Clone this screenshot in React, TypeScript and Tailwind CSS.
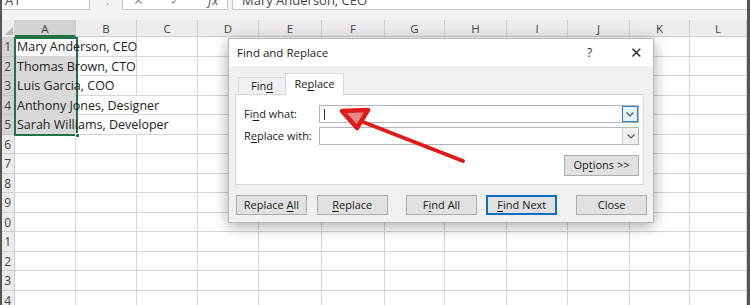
import React from "react";

const cols = [
  { name: "A", w: 61 },
  { name: "B", w: 61 },
  { name: "C", w: 61 },
  { name: "D", w: 61 },
  { name: "E", w: 63 },
  { name: "F", w: 63 },
  { name: "G", w: 60 },
  { name: "H", w: 62 },
  { name: "I", w: 61 },
  { name: "J", w: 62 },
  { name: "K", w: 60 },
  { name: "L", w: 57 },
];

const people = [
  "Mary Anderson, CEO",
  "Thomas Brown, CTO",
  "Luis Garcia, COO",
  "Anthony Jones, Designer",
  "Sarah Williams, Developer",
];

const rows = Array.from({ length: 14 }, (_, i) => i + 1);

// underlined access key inside a label
const Key = ({ children }: { children: React.ReactNode }) => (
  <span className="underline underline-offset-2">{children}</span>
);

const FormulaBar = () => (
  <div className="flex h-[10px] shrink-0 overflow-hidden bg-[#f3f3f3] text-[13px] leading-[16px] text-[#444]">
    <div className="w-[88px] border-r border-b border-[#c8c8c8] bg-white pl-[3px]">
      <div className="mt-[-8px]">A1</div>
    </div>
    <div className="w-[32px] pl-[16px] text-[#999]">
      <div className="mt-[-8px]">:</div>
    </div>
    <div className="flex w-[106px] items-start border-x border-b border-[#c8c8c8] bg-white text-[#999]">
      <div className="mt-[-8px] ml-[10px] w-[37px]">✕</div>
      <div className="mt-[-8px] w-[38px]">✓</div>
      <div className="mt-[-8px] italic text-[#555]">fx</div>
    </div>
    <div className="ml-[4px] flex-1 border-l border-b border-[#c8c8c8] bg-white pl-[9px]">
      <div className="mt-[-8px]">Mary Anderson, CEO</div>
    </div>
  </div>
);

const Sheet = () => (
  <div className="relative shrink-0 font-['Open_Sans',sans-serif]">
    {/* column headers */}
    <div className="flex h-[17px] bg-[#ededed] text-[11.5px] leading-[17px] text-[#444]">
      <div className="relative w-[13px] shrink-0 border-r border-[#cfcfcf]">
        <svg className="absolute right-[1px] bottom-[2px]" width="8" height="8" viewBox="0 0 8 8">
          <polygon points="8,0 8,8 0,8" fill="#b8b8b8" />
        </svg>
      </div>
      {cols.map((c) => (
        <div
          key={c.name}
          style={{ width: c.w }}
          className={
            c.name === "A"
              ? "shrink-0 border-r border-b-2 border-r-[#cfcfcf] border-b-[#217346] bg-[#d3d3d3] text-center"
              : "shrink-0 border-r border-b border-[#cfcfcf] text-center"
          }
        >
          {c.name}
        </div>
      ))}
    </div>

    {/* grid rows */}
    {rows.map((r) => (
      <div key={r} className="flex h-[19.5px] text-[12.5px] leading-[19px] text-[#222]">
        <div
          className={
            r <= 5
              ? "flex w-[13px] shrink-0 justify-end overflow-hidden border-r border-b border-[#c4c4c4] bg-[#d3d3d3] pr-[3px] text-[12px] text-[#444]"
              : "flex w-[13px] shrink-0 justify-end overflow-hidden border-r border-b border-[#cfcfcf] bg-[#ececec] pr-[3px] text-[12px] text-[#444]"
          }
        >
          {r}
        </div>
        {cols.map((c, ci) => {
          const selected = ci === 0 && r >= 2 && r <= 5;
          const hideRight = (ci === 0 && r <= 5) || (ci === 1 && (r === 4 || r === 5));
          return (
            <div
              key={c.name}
              style={{ width: c.w }}
              className={[
                "shrink-0 whitespace-nowrap border-b border-[#d6d6d6]",
                hideRight ? "border-r border-r-transparent" : "border-r",
                selected ? "bg-[#d9d9d9]" : "",
              ].join(" ")}
            >
              {ci === 0 && r <= 5 && (
                <span className="relative z-10 pl-[2px]">{people[r - 1]}</span>
              )}
            </div>
          );
        })}
      </div>
    ))}

    {/* selection box with fill handle */}
    <div className="absolute top-[17px] left-[12px] h-[99px] w-[64px] border-2 border-[#217346]">
      <div className="absolute right-[-4px] bottom-[-4px] h-[5px] w-[5px] border border-white bg-[#217346]" />
    </div>
  </div>
);

const Button = ({
  children,
  className,
  primary,
}: {
  children: React.ReactNode;
  className?: string;
  primary?: boolean;
}) => (
  <div
    className={[
      "flex h-[20px] w-[71px] items-center justify-center bg-[#e1e1e1] text-[11px] text-[#1a1a1a]",
      primary ? "border-2 border-[#0a6fc2]" : "border border-[#adadad]",
      className ?? "",
    ].join(" ")}
  >
    <span className="whitespace-pre">{children}</span>
  </div>
);

const Combo = ({ focused }: { focused?: boolean }) => (
  <div className="flex h-[18px] flex-1 border border-[#b4b4b4] bg-white">
    <div className="flex flex-1 items-center pl-[4px]">
      {focused && <div className="h-[11px] w-[1px] bg-[#333]" />}
    </div>
    <div
      className={
        focused
          ? "flex w-[16px] items-center justify-center border border-[#2b7fd0] bg-[#e5f1fb]"
          : "flex w-[16px] items-center justify-center border-l border-[#c8c8c8] bg-[#f0f0f0]"
      }
    >
      <svg width="8" height="5" viewBox="0 0 8 5">
        <path d="M0.5 0.5 L4 4 L7.5 0.5" fill="none" stroke="#555" strokeWidth="1.2" />
      </svg>
    </div>
  </div>
);

const Dialog = () => (
  <div className="absolute top-[38px] left-[228px] flex h-[185px] w-[426px] flex-col border border-[#b9b9b9] bg-[#f0f0f0] font-['Open_Sans',sans-serif] text-[11px] text-[#1a1a1a] shadow-[0_3px_14px_rgba(0,0,0,0.35)]">
    <div className="flex h-[27px] items-center bg-white pl-[8px] text-[11.5px]">
      <span className="flex-1">Find and Replace</span>
      <span className="w-[43px] text-[12px] text-[#333]">?</span>
      <span className="w-[23px] text-[15px] leading-none text-[#333]">✕</span>
    </div>
    <div className="flex flex-1 flex-col px-[6px]">
      <div className="mt-[7px] flex h-[21px] items-end pl-[3px]">
        <div className="flex h-[17px] w-[47px] items-center justify-center border-t border-l border-[#d9d9d9] bg-[#f0f0f0]">
          <span>
            Fin<Key>d</Key>
          </span>
        </div>
        <div className="relative z-10 mb-[-1px] flex h-[22px] w-[59px] items-center justify-center border-x border-t border-[#d9d9d9] bg-white">
          <span>
            Re<Key>p</Key>lace
          </span>
        </div>
      </div>
      <div className="flex h-[91px] w-[409px] flex-col border border-[#d9d9d9] bg-white pt-[10px] pr-[4px] pl-[8px]">
        <div className="flex items-center">
          <span className="w-[75px]">
            Fi<Key>n</Key>d what:
          </span>
          <Combo focused />
        </div>
        <div className="mt-[4px] flex items-center">
          <span className="w-[75px]">
            R<Key>e</Key>place with:
          </span>
          <Combo />
        </div>
        <div className="mt-[10px] flex justify-end">
          <Button className="w-[75px]! h-[21px]!">
            Op<Key>t</Key>ions &gt;&gt;
          </Button>
        </div>
      </div>
      <div className="mt-[10px] flex">
        <Button className="ml-[1px]">
          Replace <Key>A</Key>ll
        </Button>
        <Button className="ml-[10px]">
          <Key>R</Key>eplace
        </Button>
        <Button className="ml-[18px] w-[72px]!">
          F<Key>i</Key>nd All
        </Button>
        <Button primary className="ml-[9px]">
          <Key>F</Key>ind Next
        </Button>
        <Button className="ml-[19px]">Close</Button>
      </div>
    </div>
  </div>
);

const Arrow = () => (
  <svg className="pointer-events-none absolute top-0 left-0" width="750" height="305" viewBox="0 0 750 305">
    <line x1="463" y1="161" x2="358" y2="120" stroke="#e01a1a" strokeWidth="4" strokeLinecap="round" />
    <polygon
      points="342,111 368,110 357,128"
      fill="#ee8a8a"
      stroke="#e01a1a"
      strokeWidth="4.5"
      strokeLinejoin="round"
    />
  </svg>
);

export default function App() {
  return (
    <div className="relative h-[305px] w-[750px] overflow-hidden bg-white font-['Open_Sans',sans-serif]">
      <div className="flex h-full">
        <div className="w-[2px] shrink-0 bg-[#555]" />
        <div className="flex min-w-0 flex-1 flex-col overflow-hidden">
          <FormulaBar />
          <div className="h-[10px] shrink-0 bg-[#f3f3f3]" />
          <Sheet />
        </div>
        <div className="w-[3px] shrink-0 bg-[#555]" />
      </div>
      <Dialog />
      <Arrow />
    </div>
  );
}
